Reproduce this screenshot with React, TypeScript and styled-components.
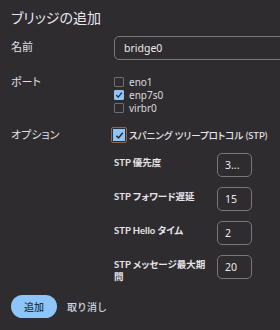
import styled, { createGlobalStyle } from 'styled-components';

const GlobalStyle = createGlobalStyle`
  html, body {
    margin: 0;
    padding: 0;
    background: #2e2c2f;
  }
  body {
    font-family: Lato, "Noto Sans CJK JP", sans-serif;
    font-feature-settings: "palt";
    color: #e4e2e6;
  }
`;

const Dialog = styled.div`
  width: 280px;
  height: 330px;
  box-sizing: border-box;
  padding: 8px 0 0 11px;
  overflow: hidden;
  background: #2e2c2f;
`;

const Heading = styled.h2`
  margin: 0 0 8px;
  font-size: 14px;
  line-height: 20px;
  font-weight: 400;
  color: #e8e6ea;
`;

const Row = styled.div<{ $gap?: number }>`
  display: grid;
  grid-template-columns: 103px 1fr;
  align-items: start;
  margin-bottom: ${({ $gap }) => $gap ?? 15}px;
`;

const Label = styled.div<{ $top?: number }>`
  font-size: 11px;
  line-height: 14px;
  padding-top: ${({ $top }) => $top ?? 0}px;
  color: #e2e0e4;
`;

const TextInput = styled.input`
  box-sizing: border-box;
  width: 200px;
  height: 24px;
  padding: 0 9px;
  border: 1px solid #7a787d;
  border-radius: 5px;
  background: #2e2c2f;
  color: #eceaee;
  font-family: "Noto Sans", sans-serif;
  font-size: 10.5px;
  outline: none;
`;

const CheckList = styled.div`
  display: flex;
  flex-direction: column;
`;

const CheckRow = styled.label`
  display: flex;
  align-items: center;
  gap: 5px;
  height: 13px;
  font-size: 10px;
  color: #dcdade;
  font-family: "Noto Sans", sans-serif;
`;

const Box = styled.span<{ $checked?: boolean; $focused?: boolean }>`
  box-sizing: border-box;
  width: 10px;
  height: 10px;
  border-radius: 1px;
  border: 1px solid ${({ $checked }) => ($checked ? '#8ec4f6' : '#6f6d72')};
  background: ${({ $checked }) => ($checked ? '#8ec4f6' : 'transparent')};
  display: inline-flex;
  align-items: center;
  justify-content: center;
  flex-shrink: 0;
  ${({ $focused }) => $focused && `
    width: 14px;
    height: 14px;
    outline: 1px solid #8a6a55;
    outline-offset: 0;
    border: 1px solid #2e2c2f;
    box-shadow: inset 0 0 0 1px #8ec4f6;
  `}
`;

const StpRow = styled.label`
  display: flex;
  align-items: center;
  gap: 3px;
  margin-left: -2px;
  height: 14px;
  font-size: 9.5px;
  font-weight: 500;
  color: #e6e4e8;
  white-space: nowrap;
`;

const SubList = styled.div`
  display: flex;
  flex-direction: column;
  gap: 10px;
  margin-top: 11px;
`;

const SubRow = styled.div`
  display: grid;
  grid-template-columns: 103px 35px;
  align-items: start;
`;

const SubLabel = styled.div`
  font-size: 9.5px;
  line-height: 12px;
  font-weight: 700;
  padding: 4px 8px 0 0;
  color: #e6e4e8;
`;

const SmallInput = styled(TextInput)`
  width: 35px;
  padding: 0 7px;
`;

const Actions = styled.div`
  display: flex;
  align-items: center;
  gap: 10px;
  margin-top: 12px;
`;

const PrimaryButton = styled.button`
  width: 46px;
  height: 23px;
  border: none;
  border-radius: 12px;
  background: #8ec5f8;
  color: #1f3448;
  font-family: "Noto Sans CJK JP", sans-serif;
  font-size: 10px;
  font-weight: 500;
  padding: 0;
`;

const TextButton = styled.button`
  border: none;
  background: none;
  color: #cfd6e0;
  font-family: "Noto Sans CJK JP", sans-serif;
  font-size: 10px;
  font-weight: 500;
  padding: 0;
`;

const Tick = ({ size = 8, color = '#1c2a38' }: { size?: number; color?: string }) => (
  <svg width={size} height={size} viewBox="0 0 10 10">
    <path d="M1.5 5.2 L4 7.6 L8.6 2" fill="none" stroke={color} strokeWidth="1.6" />
  </svg>
);

const ports = [
  { name: 'eno1', checked: false },
  { name: 'enp7s0', checked: true },
  { name: 'virbr0', checked: false },
];

const stpFields = [
  { label: 'STP 優先度', value: '3...' },
  { label: 'STP フォワード遅延', value: '15' },
  { label: 'STP Hello タイム', value: '2' },
  { label: 'STP メッセージ最大期間', value: '20' },
];

export default function App() {
  return (
    <>
      <GlobalStyle />
      <Dialog>
        <Heading>ブリッジの追加</Heading>
        <Row>
          <Label $top={4}>名前</Label>
          <TextInput defaultValue="bridge0" />
        </Row>
        <Row $gap={14}>
          <Label>ポート</Label>
          <CheckList>
            {ports.map((p) => (
              <CheckRow key={p.name}>
                <Box $checked={p.checked}>{p.checked && <Tick />}</Box>
                {p.name}
              </CheckRow>
            ))}
          </CheckList>
        </Row>
        <Row $gap={0}>
          <Label>オプション</Label>
          <div>
            <StpRow>
              <Box $checked $focused>
                <Tick size={9} />
              </Box>
              スパニング ツリープロトコル (STP)
            </StpRow>
            <SubList>
              {stpFields.map((f) => (
                <SubRow key={f.label}>
                  <SubLabel>{f.label}</SubLabel>
                  <SmallInput defaultValue={f.value} />
                </SubRow>
              ))}
            </SubList>
          </div>
        </Row>
        <Actions>
          <PrimaryButton>追加</PrimaryButton>
          <TextButton>取り消し</TextButton>
        </Actions>
      </Dialog>
    </>
  );
}
